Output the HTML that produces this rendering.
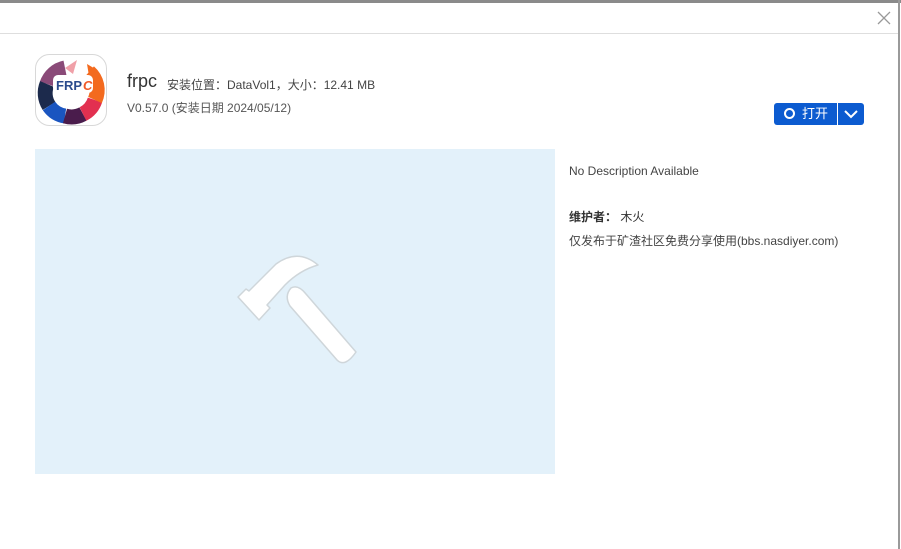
<!DOCTYPE html>
<html><head><meta charset="utf-8"><style>
*{margin:0;padding:0;box-sizing:border-box}
body{width:901px;height:549px;background:#fff;position:relative;overflow:hidden;font-family:"Liberation Sans","Noto Sans CJK SC",sans-serif;color:#333}
.top{position:absolute;left:0;top:0;width:901px;height:3px;background:#8a8a8a}
.rb{position:absolute;right:1px;top:0;width:2px;height:549px;background:#9a9a9a}
.hl{position:absolute;left:0;top:33px;width:898px;height:1px;background:#dedede}
.t{position:absolute;white-space:nowrap}
</style></head><body>
<div class="top"></div><div class="rb"></div><div class="hl"></div>
<svg class="t" style="left:877px;top:11px" width="14" height="14"><path d="M1 1L13 13M13 1L1 13" stroke="#999" stroke-width="1.3"/></svg>
<svg class="t" style="left:35px;top:54px" width="72" height="72" viewBox="0 0 72 72">
<rect x="0.5" y="0.5" width="71" height="71" rx="14" fill="#fff" stroke="#d8d8d8"/>
<g fill="none" stroke-width="15">
<path d="M30 14 A24 24 0 0 0 12 30" stroke="#8a4a78"/>
<path d="M12 30 A24 24 0 0 0 14 52" stroke="#1c2a4c"/>
<path d="M14 52 A24 24 0 0 0 30 62" stroke="#1a55c0"/>
<path d="M30 62 A24 24 0 0 0 48 60" stroke="#4a1c4c"/>
<path d="M48 60 A24 24 0 0 0 60 46" stroke="#e23050"/>
<path d="M60 46 A24 24 0 0 0 54 18" stroke="#f36a1e"/>
</g>
<path d="M30 14 L42 6 L38 20 Z" fill="#f0a0a8"/>
<path d="M52 10 L62 16 L54 22 Z" fill="#f36a1e"/>
<rect x="18" y="21" width="40" height="18" rx="5" fill="#fff"/>
<rect x="30" y="36" width="10" height="8" fill="#fff"/>
<text x="21" y="36" font-family="Liberation Sans" font-weight="bold" font-size="13" fill="#2a4a8c">FRP</text><text x="48" y="36" font-family="Liberation Sans" font-weight="bold" font-style="italic" font-size="13" fill="#f05a28">C</text>
</svg>
<div class="t" style="left:127px;top:71px;font-size:18px;color:#333">frpc</div>
<div class="t" style="left:167px;top:76px;font-size:12px;color:#444">安装位置：DataVol1，大小：12.41 MB</div>
<div class="t" style="left:127px;top:99px;font-size:12px;color:#555">V0.57.0 (安装日期 2024/05/12)</div>
<div class="t" style="left:774px;top:103px;width:90px;height:22px;background:#0c5bd0;border-radius:3px"></div>
<div class="t" style="left:837px;top:103px;width:1px;height:22px;background:#fff"></div>
<div class="t" style="left:784px;top:108px;width:11px;height:11px;border:2.5px solid #fff;border-radius:50%"></div>
<div class="t" style="left:802px;top:105px;font-size:13px;color:#fff;line-height:18px">打开</div>
<svg class="t" style="left:843px;top:108px" width="16" height="12"><path d="M2 3L8 9L14 3" stroke="#fff" stroke-width="2" fill="none"/></svg>
<div class="t" style="left:35px;top:149px;width:520px;height:325px;background:#e3f1fa"></div>
<svg class="t" style="left:230px;top:250px" width="140" height="125" viewBox="230 250 140 125">
<g fill="#fff" stroke="#cfd6da" stroke-width="1.5" stroke-linejoin="round">
<path d="M238 297 L246 289 L249 291 L276 264 Q298 248 318 265 Q300 270 285 285 L267 305 L270 308 L259 320 Z"/>
<path d="M291 288 Q284 296 290 306 L337 360 Q345 368 356 352 L306 294 Q298 284 291 288 Z"/>
</g></svg>
<div class="t" style="left:569px;top:164px;font-size:12px;color:#444">No Description Available</div>
<div class="t" style="left:569px;top:208px;font-size:12px;color:#333"><b>维护者：</b> 木火</div>
<div class="t" style="left:569px;top:232px;font-size:12px;color:#444">仅发布于矿渣社区免费分享使用(bbs.nasdiyer.com)</div>
</body></html>
